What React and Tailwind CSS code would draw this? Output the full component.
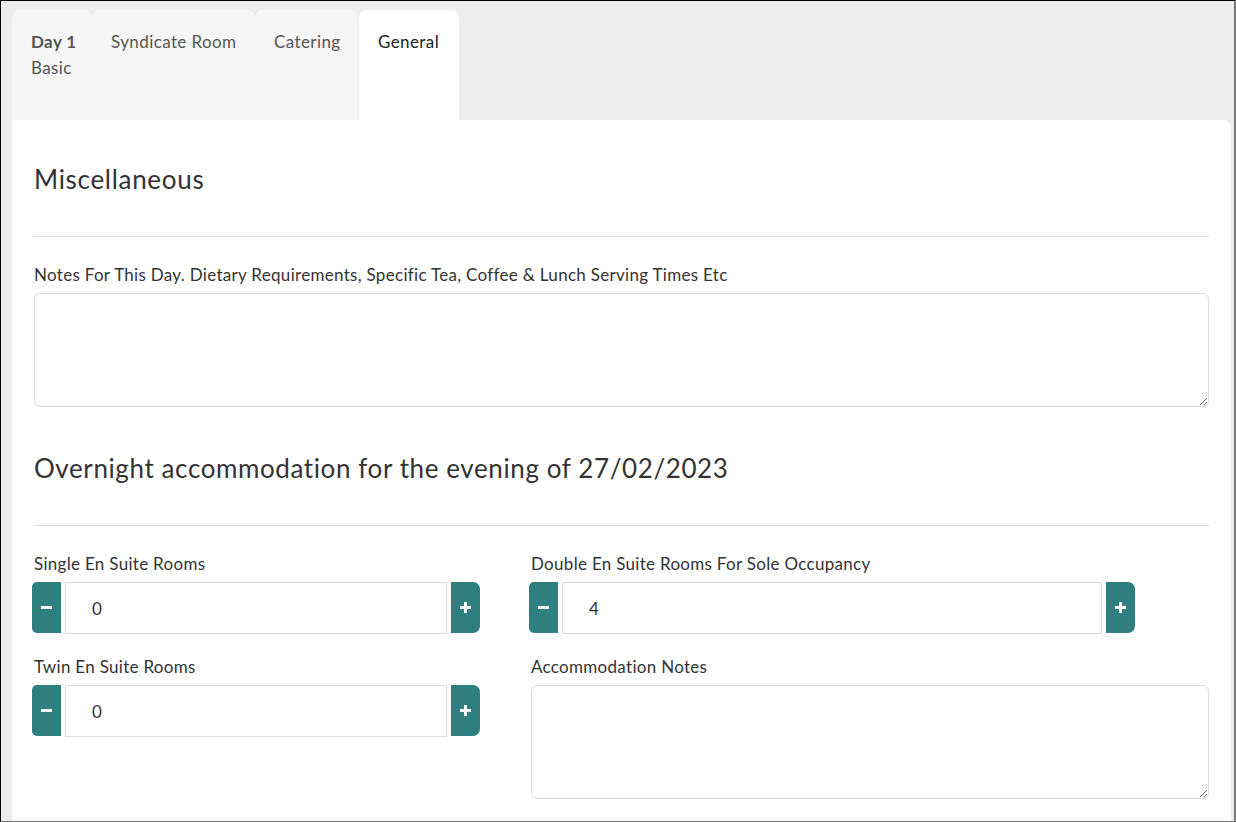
import { useState } from 'react';

const font = { fontFamily: 'Lato, "Open Sans", Arial, sans-serif' };

function Stepper({ value, inputWidth }) {
  const [n, setN] = useState(value);
  return (
    <div className="flex h-[52px] gap-[4px] -ml-[2px]">
      <button
        onClick={() => setN((v) => Math.max(0, v - 1))}
        className="w-[29px] h-[51px] bg-[#2f7f80] rounded-l-[5px] flex items-center justify-center"
      >
        <span className="block w-[11px] h-[3px] bg-white" />
      </button>
      <input
        value={n}
        readOnly
        className={`${inputWidth} h-[52px] border border-[#dddddd] pl-[26px] text-[17px] text-[#333] outline-none`}
      />
      <button
        onClick={() => setN((v) => v + 1)}
        className="w-[29px] h-[51px] bg-[#2f7f80] rounded-r-[7px] flex items-center justify-center"
      >
        <svg width="11" height="11" viewBox="0 0 11 11">
          <rect x="4" y="0" width="3" height="11" fill="white" />
          <rect x="0" y="4" width="11" height="3" fill="white" />
        </svg>
      </button>
    </div>
  );
}

export default function App() {
  const tabs = [
    { label: 'Syndicate Room', w: 'w-[163px]' },
    { label: 'Catering', w: 'w-[103px]' },
  ];

  return (
    <div
      style={font}
      className="w-[1236px] h-[822px] overflow-hidden bg-[#ededed] border-t border-l border-black border-r-2 border-r-[#777] border-b border-b-[#777] pt-[9px] pl-[11px] pr-[3px] flex flex-col"
    >
      {/* Tabs */}
      <div className="flex h-[110px] shrink-0 text-[17px] leading-[26px] tracking-[0.4px]">
        <div className="w-[80px] bg-[#f6f6f6] rounded-t-lg pt-[19px] pl-[19px] text-[#555]">
          <div className="font-bold">Day 1</div>
          <div>Basic</div>
        </div>
        {tabs.map((t) => (
          <div
            key={t.label}
            className={`${t.w} bg-[#f6f6f6] rounded-t-lg pt-[19px] pl-[19px] text-[#555]`}
          >
            {t.label}
          </div>
        ))}
        <div className="w-[100px] ml-[1px] bg-white rounded-t-lg pt-[19px] pl-[19px] text-[#222]">
          General
        </div>
      </div>

      {/* Card */}
      <div className="flex-1 bg-white rounded-tr-lg px-[22px] pt-[44px] text-[#333]">
        <h2 className="text-[26px] leading-[30px] tracking-[0.7px]">Miscellaneous</h2>
        <hr className="mt-[42px] border-t border-[#dddddd]" />

        <label className="block mt-[28px] text-[17px] leading-[20px] tracking-[0.3px]">
          Notes For This Day. Dietary Requirements, Specific Tea, Coffee &amp; Lunch Serving Times Etc
        </label>
        <textarea className="block mt-[8px] w-full h-[114px] border border-[#dddddd] rounded-md outline-none" />

        <h2 className="mt-[46px] text-[26px] leading-[30px] tracking-[0.6px]">
          Overnight accommodation for the evening of 27/02/2023
        </h2>
        <hr className="mt-[42px] border-t border-[#dddddd]" />

        <div className="flex mt-[28px] text-[17px] leading-[20px] tracking-[0.3px]">
          <div className="w-[497px] shrink-0">
            <label className="block">Single En Suite Rooms</label>
            <div className="mt-[8px]">
              <Stepper value={0} inputWidth="w-[382px]" />
            </div>
            <label className="block mt-[23px]">Twin En Suite Rooms</label>
            <div className="mt-[8px]">
              <Stepper value={0} inputWidth="w-[382px]" />
            </div>
          </div>
          <div className="flex-1">
            <label className="block">Double En Suite Rooms For Sole Occupancy</label>
            <div className="mt-[8px]">
              <Stepper value={4} inputWidth="w-[540px]" />
            </div>
            <label className="block mt-[23px]">Accommodation Notes</label>
            <textarea className="block mt-[8px] w-full h-[114px] border border-[#dddddd] rounded-md outline-none" />
          </div>
        </div>
      </div>
    </div>
  );
}
